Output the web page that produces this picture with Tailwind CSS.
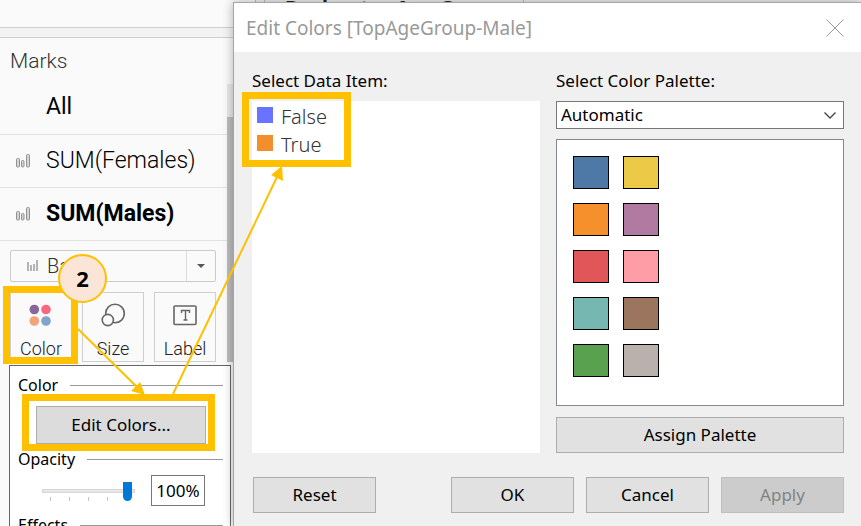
<!DOCTYPE html>
<html lang="en">
<head>
<meta charset="utf-8">
<meta name="viewport" content="width=device-width, initial-scale=1">
<title>Edit Colors</title>
<script src="https://cdn.jsdelivr.net/npm/@tailwindcss/browser@4"></script>
</head>
<body class="bg-[#fafafa] text-black">
<div class="relative h-screen overflow-hidden font-['Noto_Sans',sans-serif]">

  <!-- Worksheet behind the dialog -->
  <header class="flex h-7 border-b border-[#cfcfcf] bg-[#fafafa]">
    <div class="w-64 shrink-0 border-r border-[#b8b8b8]"></div>
    <div class="w-2 shrink-0 bg-[#efefef]"></div>
    <div class="flex w-[260px] border-x border-[#b8b8b8] bg-[#ececec] pl-5">
      <p class="-mt-1 text-[20px] leading-6 font-bold whitespace-nowrap text-[#222]">Declarator Age Group</p>
    </div>
    <div class="flex-1 bg-[#ececec]"></div>
  </header>

  <aside class="flex w-[233px] flex-col bg-[#fafafa] font-['Roboto',sans-serif]" aria-label="Marks card">
    <div class="h-2.5 border-b border-[#cfcfcf] bg-[#f3f3f3]"></div>
    <div class="flex">
      <div class="min-w-0 flex-1">
        <h2 class="flex h-[42px] items-center pt-[6px] pl-[10px] text-[21px] font-light text-[#333]">Marks</h2>
        <ul class="text-[23px] leading-7">
          <li class="flex h-[55px] items-center border-b border-[#e2e2e2] pl-[46px]">All</li>
          <li class="flex h-[53px] items-center border-b border-[#e2e2e2] pl-4 font-light">
            <svg class="mr-4 h-[14px] w-[14px] shrink-0" viewBox="0 0 14 14" fill="#d4d4d4" stroke="#929292" aria-hidden="true"><rect x=".5" y="4.500" width="3" height="8.500" rx="1"/><rect x="5.500" y="6.500" width="2.500" height="6.500" rx="1"/><rect x="10.500" y=".5" width="3" height="12.500" rx="1"/></svg>SUM(Females)</li>
          <li class="flex h-[53px] items-center border-b border-[#e2e2e2] pl-4 font-bold">
            <svg class="mr-4 h-[14px] w-[14px] shrink-0" viewBox="0 0 14 14" fill="#d4d4d4" stroke="#929292" aria-hidden="true"><rect x=".5" y="4.500" width="3" height="8.500" rx="1"/><rect x="5.500" y="6.500" width="2.500" height="6.500" rx="1"/><rect x="10.500" y=".5" width="3" height="12.500" rx="1"/></svg>SUM(Males)</li>
        </ul>
        <div class="pt-[9px] pr-[11px] pl-[10px]">
          <button type="button" class="flex h-8 w-full items-center rounded-[2px] border border-[#cbcbcb] text-[20px] font-light text-[#333]" aria-label="Mark type: Bar">
            <svg class="mr-2 ml-4 h-3 w-3" viewBox="0 0 12 12" fill="#b4b4b4" aria-hidden="true"><rect x="0" y="2" width="2" height="9"/><rect x="3" y="5" width="2" height="6"/><rect x="6" y="4" width="2" height="7"/><rect x="9" y="0" width="2" height="11"/></svg>
            <span class="flex-1 text-left">Bar</span>
            <span class="flex h-full w-[29px] items-center justify-center border-l border-[#dcdcdc]"><svg class="h-1 w-2" viewBox="0 0 8 4" aria-hidden="true"><path d="M0 0h8L4 4z" fill="#555"/></svg></span>
          </button>
          <div class="mt-[10px] grid grid-cols-3 gap-[10px] text-[18px] leading-5 font-light text-[#222]">
            <button type="button" class="flex h-[70px] flex-col items-center justify-between border border-[#cfcfcf] pt-[10px] pb-[2px]">
              <svg class="h-6 w-6" viewBox="0 0 24 24" aria-hidden="true"><circle cx="5.300" cy="6.500" r="4.800" fill="#85699a"/><circle cx="17" cy="6.500" r="4.800" fill="#f8697d"/><circle cx="5.300" cy="18" r="4.800" fill="#f2a37a"/><circle cx="17" cy="18" r="4.800" fill="#7fa3cb"/></svg>
              Color
            </button>
            <button type="button" class="flex h-[70px] flex-col items-center justify-between border border-[#cfcfcf] pt-[10px] pb-[2px]">
              <svg class="h-6 w-6" viewBox="0 0 24 24" fill="#fafafa" stroke="#666" stroke-width="1.600" aria-hidden="true"><circle cx="14" cy="10.500" r="9.300"/><circle cx="6.800" cy="17" r="5.600"/></svg>
              Size
            </button>
            <button type="button" class="flex h-[70px] flex-col items-center justify-between border border-[#cfcfcf] pt-[10px] pb-[2px]">
              <svg class="h-6 w-6" viewBox="0 0 24 24" fill="none" stroke="#666" aria-hidden="true"><rect x="1" y="3" width="22" height="18.500" rx="1" stroke-width="1.600"/><path d="M8.500 10V7.500h8V10M12.500 7.500v9.500M10.500 17h4" stroke-width="1.400"/></svg>
              Label
            </button>
          </div>
        </div>
      </div>
      <div class="mt-[46px] flex w-[6px] flex-col bg-[#e9e9e9]"><div class="mt-[33px] flex-1 bg-[#bdbdbd]"></div></div>
    </div>

    <!-- Color menu -->
    <section class="mt-[3px] mr-[2px] ml-[9px] flex flex-col border border-b-0 border-[#666] bg-white pr-[7px] pl-2 font-['Noto_Sans',sans-serif] text-[17px] leading-6" aria-label="Color options">
      <h3 class="mt-[7px] flex items-center gap-3 text-base">Color<span class="h-px flex-1 bg-[#999]"></span></h3>
      <button type="button" class="mr-[17px] ml-[18px] mt-[9px] h-[38px] border border-[#adadad] bg-[#dcdcdc]">Edit Colors...</button>
      <h3 class="mt-[3px] flex items-center gap-3 text-base">Opacity<span class="h-px flex-1 bg-[#999]"></span></h3>
      <div class="mt-1 flex items-center gap-4 pr-[18px] pl-6">
        <div class="relative h-5 flex-1">
          <input id="opacity" type="range" min="0" max="100" value="97" aria-label="Opacity" class="relative z-10 block h-5 w-full appearance-none bg-transparent [&::-webkit-slider-runnable-track]:h-1 [&::-webkit-slider-runnable-track]:border [&::-webkit-slider-runnable-track]:border-[#d6d6d6] [&::-webkit-slider-runnable-track]:bg-[#e7e7e7] [&::-webkit-slider-thumb]:-mt-2 [&::-webkit-slider-thumb]:h-[19px] [&::-webkit-slider-thumb]:w-[9px] [&::-webkit-slider-thumb]:appearance-none [&::-webkit-slider-thumb]:rounded-b-full [&::-webkit-slider-thumb]:bg-[#0078d7]">
          <div class="absolute inset-x-2 top-4 flex h-1 justify-between"><i class="w-px bg-[#c4c4c4]"></i><i class="w-px bg-[#c4c4c4]"></i><i class="w-px bg-[#c4c4c4]"></i><i class="w-px bg-[#c4c4c4]"></i><i class="w-px"></i></div>
        </div>
        <input type="text" value="100%" aria-label="Opacity value" class="h-[31px] w-[54px] border border-[#777] bg-white text-center">
      </div>
      <h3 class="mt-[7px] flex items-center gap-3 text-base leading-6">Effects<span class="h-px flex-1 bg-[#999]"></span></h3>
    </section>
  </aside>

  <!-- Edit Colors dialog -->
  <div role="dialog" aria-labelledby="dlg" class="absolute top-[2px] right-0 bottom-0 left-[233px] flex flex-col border-t border-l border-[#a6a6a6] bg-[#f0f0f0] text-[17px] leading-6 shadow-[0_0_10px_rgba(0,0,0,0.3)]">
    <div class="flex h-[49px] shrink-0 items-center justify-between bg-white pr-[17px] pl-3">
      <h1 id="dlg" class="text-[19px] text-[#999]">Edit Colors [TopAgeGroup-Male]</h1>
      <button type="button" aria-label="Close"><svg class="h-[18px] w-[18px]" viewBox="0 0 18 18" stroke="#999" aria-hidden="true"><path d="M.5.5l17 17M17.500.5l-17 17"/></svg></button>
    </div>
    <div class="flex gap-4 pt-[17px] pr-[17px] pl-[18px]">
      <div class="flex flex-1 flex-col">
        <h2>Select Data Item:</h2>
        <ul class="mt-2 flex-1 bg-white pt-[2px] pl-[5px] text-[20px] leading-7 font-light text-[#333]">
          <li class="flex items-center gap-2"><span class="mb-1 size-4 bg-[#6a73ff]"></span>False</li>
          <li class="flex items-center gap-2"><span class="mb-1 size-4 bg-[#f28e2b]"></span>True</li>
        </ul>
      </div>
      <div class="flex flex-1 flex-col">
        <label for="palette">Select Color Palette:</label>
        <div class="relative mt-2">
          <select id="palette" class="h-7 w-full appearance-none border border-[#777] bg-white pl-1 leading-6"><option>Automatic</option></select>
          <svg class="pointer-events-none absolute top-[11px] right-2 h-[7px] w-3" viewBox="0 0 12 7" fill="none" stroke="#444" stroke-width="1.300" aria-hidden="true"><path d="M.5.5L6 6 11.500.5"/></svg>
        </div>
        <div class="mt-[10px] h-[267px] border border-[#828790] bg-white px-4 pt-4">
          <div class="grid w-[86px] grid-cols-2 gap-x-[14px] gap-y-[14px]">
            <button type="button" aria-label="Blue" class="h-[33px] border border-black bg-[#4e79a7]"></button>
            <button type="button" aria-label="Yellow" class="h-[33px] border border-black bg-[#edc948]"></button>
            <button type="button" aria-label="Orange" class="h-[33px] border border-black bg-[#f6902c]"></button>
            <button type="button" aria-label="Purple" class="h-[33px] border border-black bg-[#b07aa1]"></button>
            <button type="button" aria-label="Red" class="h-[33px] border border-black bg-[#e15759]"></button>
            <button type="button" aria-label="Pink" class="h-[33px] border border-black bg-[#ff9da7]"></button>
            <button type="button" aria-label="Teal" class="h-[33px] border border-black bg-[#76b7b2]"></button>
            <button type="button" aria-label="Brown" class="h-[33px] border border-black bg-[#9c755f]"></button>
            <button type="button" aria-label="Green" class="h-[33px] border border-black bg-[#59a14f]"></button>
            <button type="button" aria-label="Gray" class="h-[33px] border border-black bg-[#bab0ac]"></button>
          </div>
        </div>
        <button type="button" class="mt-[11px] h-9 border border-[#adadad] bg-[#e1e1e1]">Assign Palette</button>
      </div>
    </div>
    <div class="flex gap-3 pt-6 pr-[17px] pl-[19px]">
      <button type="button" class="mr-auto h-9 w-[123px] border border-[#adadad] bg-[#e1e1e1]">Reset</button>
      <button type="button" class="h-9 w-[123px] border border-[#adadad] bg-[#e1e1e1]">OK</button>
      <button type="button" class="h-9 w-[123px] border border-[#adadad] bg-[#e1e1e1]">Cancel</button>
      <button type="button" disabled class="h-9 w-[123px] border border-[#bfbfbf] bg-[#cccccc] text-[#838383]">Apply</button>
    </div>
  </div>

  <!-- Step annotations -->
  <svg class="pointer-events-none absolute top-0 left-0 h-[526px] w-[861px]" viewBox="0 0 861 526" fill="none" stroke="#ffc000" aria-hidden="true">
    <g stroke-width="7"><rect x="6.500" y="289.500" width="68" height="71"/><rect x="25.500" y="397.500" width="186" height="50"/><rect x="245.500" y="95.500" width="102" height="68"/></g>
    <g stroke-width="2"><path d="M78 329l60 59M173 394L277 177"/></g>
    <g fill="#ffc000" stroke="none"><path d="M145 395l-14-4 9-9zM282 166l1 15-12-6z"/></g>
  </svg>
  <div class="pointer-events-none absolute top-[254px] left-[58px] flex size-[49px] items-center justify-center rounded-full border-2 border-[#ffc000] bg-[#fbe5d6] font-['Open_Sans',sans-serif] text-[22px] font-bold">2</div>
</div>
</body>
</html>
